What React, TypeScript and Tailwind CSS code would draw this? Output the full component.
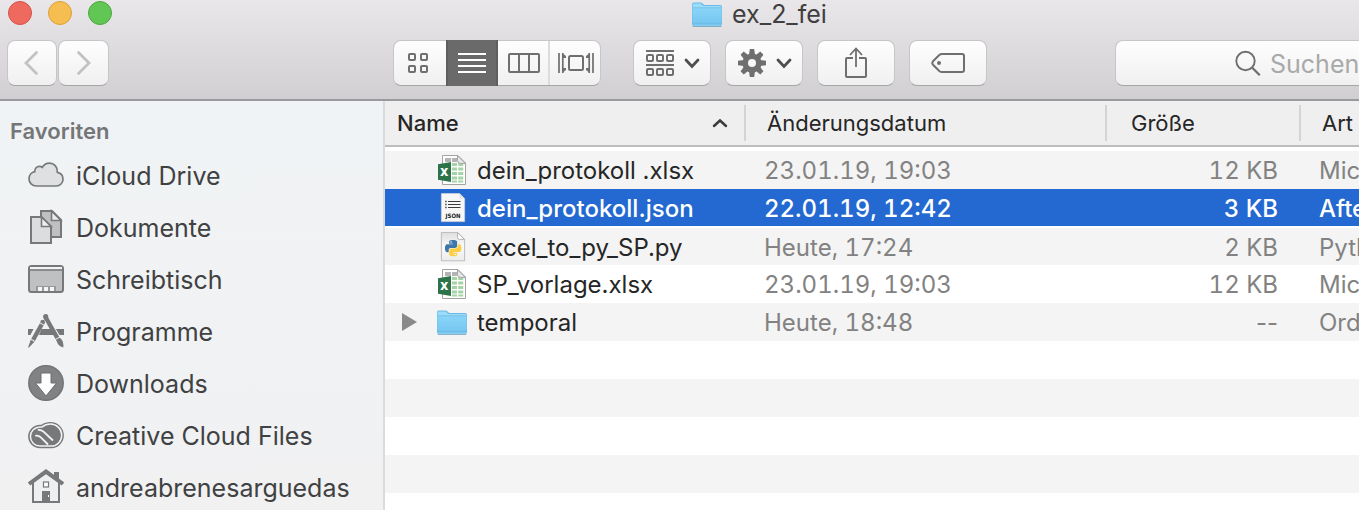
import React from "react";

const BLUE_SNAKE =
  "M14.25.18l.9.2.73.26.59.3.45.32.34.34.25.34.16.33.1.3.04.26.02.2-.01.13V8.5l-.05.63-.13.55-.21.46-.26.38-.3.31-.33.25-.35.19-.35.14-.33.1-.3.07-.26.04-.21.02H8.77l-.69.05-.59.14-.5.22-.41.27-.33.32-.27.35-.2.36-.15.37-.1.35-.07.32-.04.27-.02.21v3.06H3.17l-.21-.03-.28-.07-.32-.12-.35-.18-.36-.26-.36-.36-.35-.46-.32-.59-.28-.73-.21-.88-.14-1.05-.05-1.23.06-1.22.16-1.04.24-.87.32-.71.36-.57.4-.44.42-.33.42-.24.4-.16.36-.1.32-.05.24-.01h.16l.06.01h8.16v-.83H6.18l-.01-2.75-.02-.37.05-.34.11-.31.17-.28.25-.26.31-.23.38-.2.44-.18.51-.15.58-.12.64-.1.71-.06.77-.04.84-.02 1.27.05z";
const YELLOW_SNAKE =
  "M21.1 6.11l.28.06.32.12.35.18.36.27.36.35.35.47.32.59.28.73.21.88.14 1.04.05 1.23-.06 1.23-.16 1.04-.24.86-.32.71-.36.57-.4.45-.42.33-.42.24-.4.16-.36.09-.32.05-.24.02-.16-.01h-8.22v.82h5.84l.01 2.76.02.36-.05.34-.11.31-.17.29-.25.25-.31.24-.38.2-.44.17-.51.15-.58.13-.64.09-.71.07-.77.04-.84.01-1.27-.04-1.07-.14-.9-.2-.73-.25-.59-.3-.45-.33-.34-.34-.25-.34-.16-.33-.1-.3-.04-.25-.02-.2.01-.13v-5.34l.05-.64.13-.54.21-.46.26-.38.3-.32.33-.24.35-.2.35-.14.33-.1.3-.06.26-.04.21-.02.13-.01h5.84l.69-.05.59-.14.5-.21.41-.28.33-.32.27-.35.2-.36.15-.36.1-.35.07-.32.04-.28.02-.21V6.07h2.09l.14.01z";

/* ---------- file icons ---------- */

function FolderIcon() {
  return (
    <svg width="30" height="30" viewBox="0 0 30 30" aria-hidden="true" className="shrink-0">
      <defs>
        <linearGradient id="folder" x1="0" y1="0" x2="0" y2="1">
          <stop offset="0" stopColor="#8ad4f8" />
          <stop offset="1" stopColor="#74c5f1" />
        </linearGradient>
      </defs>
      <path d="M0 26V5.2Q0 3.6 1.6 3.6H8.6Q9.6 3.6 10.3 4.3L11.6 5.6Q12 6 12.8 6H28.4Q30 6 30 7.6V26Z" fill="#6bbbe4" />
      <path d="M.6 9V5.4Q.6 4.4 1.6 4.4H8.6L11.4 7H28.4Q29.4 7 29.4 8V9Z" fill="#9adcfa" />
      <path d="M.4 8.6H29.6V26Q29.6 26.8 28.6 26.8H1.4Q.4 26.8 .4 26Z" fill="url(#folder)" />
      <path d="M.4 8.8H29.6M.6 24.4H29.4" stroke="#68b5de" strokeWidth=".6" />
      <path d="M.6 27.4H29.4" stroke="#5c9cbd" strokeWidth=".8" />
    </svg>
  );
}

function ExcelIcon() {
  return (
    <svg width="30" height="30" viewBox="0 0 30 30" aria-hidden="true" className="shrink-0">
      <path d="M5.5.5H21L28.5 8V29.5H5.5Z" fill="#fdfdfd" stroke="#a3a3a3" />
      <path d="M8 3H14V7H8ZM15 3H20V7H15Z" fill="#b4b4b6" />
      <g fill="#a5d3a6">
        <path d="M15 8H20V11H15ZM15 12.5H20V15.5H15ZM15 17H20V20H15ZM15 21.5H20V24.5H15ZM15 25.5H20V27.5H15Z" />
        <path d="M21.2 8H26.2V11H21.2ZM21.2 12.5H26.2V15.5H21.2ZM21.2 17H26.2V20H21.2ZM21.2 21.5H26.2V24.5H21.2ZM21.2 25.5H26.2V27.5H21.2Z" />
      </g>
      <path d="M20.5.8V5.5Q20.5 8.4 23.5 8.4H28.3Z" fill="#e9e9e9" stroke="#a3a3a3" />
      <path d="M1 9.2L14 7V27L1 24.8Z" fill="#2c7349" />
      <text x="7.2" y="21" textAnchor="middle" fontFamily="Open Sans, sans-serif" fontWeight="800" fontSize="11" fill="#fff">
        X
      </text>
    </svg>
  );
}

function JsonIcon() {
  return (
    <svg width="30" height="30" viewBox="0 0 30 30" aria-hidden="true" className="shrink-0">
      <path d="M5 .4H22.6L27.6 5.6V28.6H4.4V1Q4.4.4 5 .4Z" fill="#f7f7f7" stroke="#d2d2d2" strokeWidth=".8" />
      <path d="M22.4.6V5.6H27.4Z" fill="#e3e3e3" />
      <path d="M11 8.5H23.5M11 11.5H23.5M11 14.5H23.5" stroke="#3b3b3b" strokeWidth="1.1" />
      <path d="M8.2 8.5H9.6M8.2 11.5H9.6M8.2 14.5H9.6" stroke="#3b3b3b" strokeWidth="1.3" />
      <text x="16" y="25" textAnchor="middle" fontFamily="DejaVu Sans Condensed, Open Sans, sans-serif" fontWeight="700" fontSize="6" fill="#222">
        JSON
      </text>
    </svg>
  );
}

function PythonIcon() {
  return (
    <svg width="30" height="30" viewBox="0 0 30 30" aria-hidden="true" className="shrink-0">
      <defs>
        <linearGradient id="sheet" x1="0" y1="0" x2="0" y2="1">
          <stop offset="0" stopColor="#dedede" />
          <stop offset=".5" stopColor="#fafafa" />
          <stop offset="1" stopColor="#ececec" />
        </linearGradient>
      </defs>
      <path d="M4.4.4H20.6L27.6 7.4V28.8H4.4Z" fill="url(#sheet)" stroke="#b5b5b5" strokeWidth=".9" />
      <path d="M20.6.6V5.6Q20.6 7.4 22.4 7.4H27.4Z" fill="#fff" stroke="#a5a5a5" strokeWidth=".8" />
      <g transform="translate(8 8) scale(.68)">
        <path d={BLUE_SNAKE} fill="#3c77a9" />
        <path d={YELLOW_SNAKE} fill="#fcce43" />
        <circle cx="8.9" cy="3" r="1.1" fill="#fff" />
        <circle cx="15" cy="21.2" r="1.1" fill="#fff" />
      </g>
    </svg>
  );
}

/* ---------- sidebar icons ---------- */

function SideIcon({ children }: { children: React.ReactNode }) {
  return (
    <svg width="36" height="36" viewBox="0 0 36 36" fill="none" aria-hidden="true" className="shrink-0">
      {children}
    </svg>
  );
}

const cloudIcon = (
  <SideIcon>
    <path
      d="M8.5 29C4 29 1 25.6 1 21.7C1 18 3.6 15.2 6.8 14.6C6.6 11.4 8.8 9.3 11.4 9.3C12.6 9.3 13.6 9.7 14.3 10.4C15.8 7.5 18.5 6.1 21.5 6.1C26 6.1 29.7 9.7 29.4 15.4C33 16.2 35 19 35 22.2C35 26 32 29 28.3 29Z"
      fill="#dfe0e2"
      stroke="#77787a"
      strokeWidth="1.7"
    />
  </SideIcon>
);

const documentsIcon = (
  <SideIcon>
    <path d="M13 2H24L33 11V28H13Z" fill="#bfc0c2" stroke="#77787a" strokeWidth="2" />
    <path d="M23.5 2V11.5H33Z" fill="#e9eaec" stroke="#77787a" strokeWidth="1.6" />
    <path d="M3 8H13.5L23 17.5V34H3Z" fill="#dcdddf" stroke="#77787a" strokeWidth="2" />
    <path d="M13.5 8V17.5H23Z" fill="#eeeff0" stroke="#77787a" strokeWidth="1.6" />
  </SideIcon>
);

const desktopIcon = (
  <SideIcon>
    <rect x="1" y="5" width="34" height="26" rx="2.5" fill="#bfc0c2" stroke="#77787a" strokeWidth="2" />
    <path d="M2 6H34V8.3H2Z" fill="#f2f3f4" />
    <path d="M1 9H35" stroke="#77787a" strokeWidth="1.5" />
    <path d="M8 25H28V30H8Z" fill="#98999b" />
    <path d="M10 26H14V30H10ZM16 26H20V30H16ZM22 26H26V30H22Z" fill="#f6f6f6" />
  </SideIcon>
);

const programsIcon = (
  <SideIcon>
    <path d="M0 16H36V22H0Z" fill="#77787a" />
    <path d="M16.5 4L1 33M16 4L34 34" stroke="#f1f3f4" strokeWidth="8" />
    <path d="M13.5 16H23L26.5 22H11Z" fill="#77787a" />
    <path d="M18 5L30.5 27" stroke="#77787a" strokeWidth="4.4" />
    <circle cx="17.7" cy="3.7" r="2.6" fill="#77787a" />
    <path d="M28.5 27.5L32.5 25.3Q36 28.5 35.3 34.5Q29.5 33 28.5 27.5Z" fill="#77787a" />
    <path d="M27 26.7L32.5 23.6" stroke="#f1f3f4" strokeWidth="1" />
    <path d="M14.8 9.5L4.5 28" stroke="#77787a" strokeWidth="4.4" />
    <circle cx="14.7" cy="9" r="2.3" fill="#77787a" />
    <path d="M2.7 27L6.2 29L1 34.5H0Z" fill="#77787a" />
    <path d="M11.7 9.7L16.3 12.3M2.5 25.8L6.8 28.3" stroke="#f1f3f4" strokeWidth="1" />
  </SideIcon>
);

const downloadsIcon = (
  <SideIcon>
    <circle cx="18" cy="18" r="17.2" fill="#818284" stroke="#737476" strokeWidth="1.5" />
    <path d="M13 8H23V18H28.5L18 31L7.5 18H13Z" fill="#fff" stroke="#6b6c6e" strokeWidth="1" />
  </SideIcon>
);

const creativeCloudIcon = (
  <SideIcon>
    <path
      d="M12 31.3C5.4 31.3 .1 26 .1 19.5C.1 13 5.5 7.7 12 7.7H13.5Q17 4.9 22.5 4.9C30 4.9 35.9 11 35.9 18.2C35.9 25.5 30 31.3 23.5 31.3Z"
      fill="#77787a"
    />
    <path
      d="M12 29.1C6.6 29.1 2.4 24.8 2.4 19.5C2.4 14.2 6.6 9.9 12 9.9H14.2Q17.5 7.1 22.5 7.1C28.8 7.1 33.7 12.2 33.7 18.2C33.7 24.3 28.8 29.1 23.5 29.1Z"
      stroke="#f2f3f4"
      strokeWidth="1.5"
    />
    <path d="M10.5 12.8Q13.300 12.600 15.500 14.700L24.5 23" stroke="#f2f3f4" strokeWidth="1.8" strokeLinecap="round" />
    <path
      d="M19.5 27L12.8 20.400Q10.400 18.200 8 18.700"
      stroke="#f2f3f4"
      strokeWidth="1.8"
      strokeLinecap="round"
    />
  </SideIcon>
);

const homeIcon = (
  <SideIcon>
    <path d="M26 3H31V14L26 10Z" fill="#77787a" />
    <path d="M5 13L18 4L31 13V33H5Z" fill="#eeeff0" stroke="#77787a" strokeWidth="2" />
    <path d="M1 15L18 2.5L35 15" stroke="#77787a" strokeWidth="4" />
    <rect x="15.5" y="13" width="5" height="5" fill="#fff" stroke="#77787a" strokeWidth="1.2" />
    <path d="M14 22H22V33H14Z" fill="#77787a" />
    <path d="M20.5 26V28" stroke="#fff" strokeWidth="1" />
  </SideIcon>
);

const favorites = [
  { label: "iCloud Drive", icon: cloudIcon },
  { label: "Dokumente", icon: documentsIcon },
  { label: "Schreibtisch", icon: desktopIcon },
  { label: "Programme", icon: programsIcon },
  { label: "Downloads", icon: downloadsIcon },
  { label: "Creative Cloud Files", icon: creativeCloudIcon },
  { label: "andreabrenesarguedas", icon: homeIcon },
];

/* ---------- toolbar ---------- */

const BUTTON =
  "flex h-[46px] shrink-0 items-center justify-center rounded-lg border border-[#c6c5c8] border-b-[#a6a5a8] bg-linear-to-b from-[#fefefe] to-[#f0f0f0]";

const SEGMENT = "flex w-[52px] shrink-0 items-center justify-center";

function ChevronDown() {
  return (
    <svg width="16" height="12" viewBox="0 0 16 12" fill="none" aria-hidden="true">
      <path d="M2 3L8 9.5L14 3" stroke="#4e4e4e" strokeWidth="2.8" strokeLinecap="round" />
    </svg>
  );
}

function GridIcon() {
  return (
    <svg width="20" height="20" viewBox="0 0 20 20" fill="none" stroke="#6f6f6f" strokeWidth="2" aria-hidden="true">
      <rect x="1" y="1" width="6" height="6" rx="1" />
      <rect x="13" y="1" width="6" height="6" rx="1" />
      <rect x="1" y="13" width="6" height="6" rx="1" />
      <rect x="13" y="13" width="6" height="6" rx="1" />
    </svg>
  );
}

function ArrangeIcon() {
  return (
    <svg width="28" height="26" viewBox="0 0 28 26" fill="none" stroke="#6f6f6f" strokeWidth="2" aria-hidden="true">
      <path d="M0 1H28M0 15H28" />
      {[5, 19].map((y) =>
        [1, 11, 21].map((x) => <rect key={`${x}-${y}`} x={x} y={y} width="6" height="6" rx="1" />)
      )}
    </svg>
  );
}

function GearIcon() {
  return (
    <svg width="28" height="28" viewBox="0 0 28 28" aria-hidden="true">
      <circle cx="14" cy="14" r="6.8" fill="none" stroke="#6f6f6f" strokeWidth="5.6" />
      {[0, 45, 90, 135, 180, 225, 270, 315].map((angle) => (
        <path key={angle} d="M11 6L11.8 0H16.2L17 6Z" fill="#6f6f6f" transform={`rotate(${angle} 14 14)`} />
      ))}
    </svg>
  );
}

function Toolbar() {
  return (
    <header className="shrink-0 border-b-2 border-[#9a999c] bg-linear-to-b from-[#e9e7ea] to-[#d1cfd2] pb-[13px]">
      <div className="flex h-10 items-start">
        <div className="flex w-40 shrink-0 gap-4 pt-px pl-2">
          <button aria-label="Schließen" className="size-6 rounded-full border border-[#d6504a] bg-[#ee6a5f]" />
          <button aria-label="Minimieren" className="size-6 rounded-full border border-[#dca03a] bg-[#f6be50]" />
          <button aria-label="Zoomen" className="size-6 rounded-full border border-[#4aa73c] bg-[#62c655]" />
        </div>
        <div className="flex flex-1 items-center justify-center gap-[10px]">
          <div className="-my-1">
            <FolderIcon />
          </div>
          <h1 className="text-[25px] leading-7 text-[#3f3e40]">ex_2_fei</h1>
        </div>
      </div>

      <div className="flex items-center pl-[7px]">
        <div className="flex gap-px">
          <button aria-label="Zurück" className={`${BUTTON} w-[50px]`}>
            <svg width="16" height="26" viewBox="0 0 16 26" fill="none" aria-hidden="true">
              <path d="M12.5 2.5L2 13L12.5 23.5" stroke="#c2c2c2" strokeWidth="2.8" strokeLinecap="round" />
            </svg>
          </button>
          <button aria-label="Vorwärts" className={`${BUTTON} w-[51px]`}>
            <svg width="16" height="26" viewBox="0 0 16 26" fill="none" aria-hidden="true">
              <path d="M2.5 2.5L13 13L2.5 23.5" stroke="#c2c2c2" strokeWidth="2.8" strokeLinecap="round" />
            </svg>
          </button>
        </div>

        <div className="ml-[284px] flex h-[46px] w-[208px] shrink-0 items-stretch rounded-lg border border-[#c6c5c8] border-b-[#a6a5a8] bg-linear-to-b from-[#fefefe] to-[#f0f0f0]">
          <button aria-label="Symbole" className={`${SEGMENT} pr-1`}>
            <GridIcon />
          </button>
          <button aria-label="Liste" aria-pressed="true" className={`${SEGMENT} -my-px border-x-2 border-[#5f5f5f] bg-[#6a6a6a]`}>
            <svg width="28" height="20" viewBox="0 0 28 20" aria-hidden="true">
              <path d="M0 1H28M0 7H28M0 13H28M0 19H28" stroke="#fff" strokeWidth="2" />
            </svg>
          </button>
          <button aria-label="Spalten" className={`${SEGMENT} border-r-2 border-[#dcdcdc] pl-0.5`}>
            <svg width="32" height="20" viewBox="0 0 32 20" fill="none" stroke="#6f6f6f" strokeWidth="2" aria-hidden="true">
              <rect x="1" y="1" width="30" height="18" rx="1" />
              <path d="M11 1V19M21 1V19" />
            </svg>
          </button>
          <button aria-label="Cover Flow" className="flex flex-1 items-center justify-center pl-0.5">
            <svg width="36" height="22" viewBox="0 0 36 22" fill="none" stroke="#6f6f6f" strokeWidth="2" aria-hidden="true">
              <rect x="11" y="4" width="14" height="14" rx="1.5" />
              <path d="M1 1V21M35 1V21M31.2 1V21M4.8 1V21" strokeWidth="1.7" />
              <path d="M4 1L8 4V6H5ZM4 21L8 18V16H5ZM32 1L28 4V6H31ZM32 21L28 18V16H31Z" fill="#6f6f6f" stroke="none" />
            </svg>
          </button>
        </div>

        <div className="ml-8 flex gap-[14px]">
          <button aria-label="Objekte gruppieren" className={`${BUTTON} w-[78px] gap-[10px] pl-0.5`}>
            <ArrangeIcon />
            <ChevronDown />
          </button>
          <button aria-label="Aktionen" className={`${BUTTON} w-[78px] gap-[10px] pl-0.5`}>
            <GearIcon />
            <ChevronDown />
          </button>
          <button aria-label="Teilen" className={`${BUTTON} w-[78px]`}>
            <svg width="22" height="32" viewBox="0 0 22 32" fill="none" stroke="#6f6f6f" strokeWidth="2" aria-hidden="true">
              <path d="M8 11H2Q1 11 1 12V29Q1 30 2 30H20Q21 30 21 29V12Q21 11 20 11H14" />
              <path d="M11 20V2M5 8L11 1.5L17 8" strokeWidth="1.8" />
            </svg>
          </button>
          <button aria-label="Tags bearbeiten" className={`${BUTTON} w-[78px]`}>
            <svg width="34" height="20" viewBox="0 0 34 20" fill="none" aria-hidden="true">
              <path
                d="M11 1H31Q33 1 33 3V17Q33 19 31 19H11Q9.5 19 8.3 17.9L2 11.7Q.6 10 2 8.3L8.3 2.1Q9.5 1 11 1Z"
                stroke="#6f6f6f"
                strokeWidth="2"
              />
              <circle cx="8" cy="10" r="2" fill="#6f6f6f" />
            </svg>
          </button>
        </div>

        <label className="ml-32 flex h-[46px] min-w-0 flex-1 items-center gap-[9px] rounded-l-lg border border-r-0 border-[#c6c5c8] border-b-[#a6a5a8] bg-linear-to-b from-[#fefefe] to-[#f0f0f0] pl-[119px]">
          <svg width="26" height="26" viewBox="0 0 26 26" fill="none" stroke="#6f6f6f" aria-hidden="true" className="shrink-0">
            <circle cx="10.5" cy="11" r="9.2" strokeWidth="1.9" />
            <path d="M17 17.5L24.8 25.3" strokeWidth="2.2" />
          </svg>
          <input
            type="text"
            aria-label="Suchen"
            placeholder="Suchen"
            className="min-w-0 flex-1 bg-transparent pt-0.5 text-[25px] leading-8 outline-none placeholder:text-[#a9a9a9]"
          />
        </label>
      </div>
    </header>
  );
}

/* ---------- file list ---------- */

const files = [
  { name: "dein_protokoll .xlsx", date: "23.01.19, 19:03", size: "12 KB", kind: "Mic", icon: <ExcelIcon /> },
  { name: "dein_protokoll.json", date: "22.01.19, 12:42", size: "3 KB", kind: "Afte", icon: <JsonIcon />, selected: true },
  { name: "excel_to_py_SP.py", date: "Heute, 17:24", size: "2 KB", kind: "Pyth", icon: <PythonIcon /> },
  { name: "SP_vorlage.xlsx", date: "23.01.19, 19:03", size: "12 KB", kind: "Mic", icon: <ExcelIcon /> },
  { name: "temporal", date: "Heute, 18:48", size: "--", kind: "Ord", icon: <FolderIcon />, folder: true },
];

const HEAD_CELL = "h-11 border-b-2 border-[#bdbdbd] bg-[#efefef] box-content flex items-center";
const HEAD_TEXT = "flex h-9 flex-1 items-center justify-between border-[#d4d4d4]";

function FileList() {
  return (
    <main className="min-w-0 flex-1 overflow-hidden bg-white">
      <table className="w-full table-fixed border-collapse text-left whitespace-nowrap">
        <colgroup>
          <col className="w-[361px]" />
          <col className="w-[361px]" />
          <col className="w-[194px]" />
          <col />
        </colgroup>
        <thead className="text-[22px] leading-7 text-[#262626]">
          <tr>
            <th aria-sort="ascending" className="p-0 pb-1 font-medium">
              <div className={HEAD_CELL}>
                <div className={`${HEAD_TEXT} border-r-2 pr-4 pl-3`}>
                  Name
                  <svg width="16" height="10" viewBox="0 0 16 10" fill="none" aria-hidden="true">
                    <path d="M2 8L8 2.5L14 8" stroke="#3c3c3c" strokeWidth="2.5" strokeLinecap="round" />
                  </svg>
                </div>
              </div>
            </th>
            <th className="p-0 pb-1 font-normal">
              <div className={HEAD_CELL}>
                <div className={`${HEAD_TEXT} border-r-2 pl-[21px]`}>Änderungsdatum</div>
              </div>
            </th>
            <th className="p-0 pb-1 font-normal">
              <div className={HEAD_CELL}>
                <div className={`${HEAD_TEXT} border-r-2 pl-6`}>Größe</div>
              </div>
            </th>
            <th className="p-0 pb-1 font-normal">
              <div className={HEAD_CELL}>
                <div className={`${HEAD_TEXT} pl-[21px]`}>Art</div>
              </div>
            </th>
          </tr>
        </thead>
        <tbody className="text-[24px] leading-7">
          {files.map((file) => (
            <tr
              key={file.name}
              aria-selected={file.selected ? true : undefined}
              className={
                file.selected
                  ? "h-[38px] border-b-2 border-white bg-[#2369d1] font-medium text-white"
                  : "h-[38px] text-[#828282] odd:bg-[#f4f4f4]"
              }
            >
              <td className="p-0">
                <div className="flex items-center pl-4">
                  <span className="flex w-9 shrink-0">
                    {file.folder && (
                      <button aria-label="temporal öffnen">
                        <svg width="16" height="18" viewBox="0 0 16 18" aria-hidden="true">
                          <path d="M1 0L16 9L1 18Z" fill="#8a8a8a" />
                        </svg>
                      </button>
                    )}
                  </span>
                  {file.icon}
                  <span className={file.selected ? "pt-0.5 pl-[10px]" : "pt-0.5 pl-[10px] text-[#262626]"}>{file.name}</span>
                </div>
              </td>
              <td className="p-0 pt-0.5 pl-[18px] tabular-nums">{file.date}</td>
              <td className={file.folder ? "p-0 pt-0.5 pr-[23px] text-right" : "p-0 pt-0.5 pr-[23px] text-right tabular-nums"}>
                {file.size}
              </td>
              <td className="p-0 pt-0.5 pl-[18px]">{file.kind}</td>
            </tr>
          ))}
        </tbody>
      </table>
      <div aria-hidden="true">
        <div className="h-[38px]" />
        <div className="h-[38px] bg-[#f4f4f4]" />
        <div className="h-[38px]" />
        <div className="h-[38px] bg-[#f4f4f4]" />
      </div>
    </main>
  );
}

export default function App() {
  return (
    <div className="flex h-screen flex-col overflow-hidden font-['Inter','Liberation_Sans',sans-serif]">
      <Toolbar />
      <div className="flex min-h-0 flex-1">
        <nav
          aria-label="Favoriten"
          className="w-[385px] shrink-0 overflow-hidden border-r-2 border-[#d9dbdd] bg-linear-to-b from-[#f0f3f5] to-[#f1f1f2]"
        >
          <h2 className="flex h-12 items-end pb-1 pl-[10px] text-[22px] leading-7 font-semibold text-[#747678]">Favoriten</h2>
          <ul>
            {favorites.map((item) => (
              <li key={item.label}>
                <a href="#" className="flex h-[52px] items-center gap-3 pl-7 text-[25px] leading-8 text-[#404142]">
                  {item.icon}
                  <span className="pt-0.5">{item.label}</span>
                </a>
              </li>
            ))}
          </ul>
        </nav>
        <FileList />
      </div>
    </div>
  );
}
